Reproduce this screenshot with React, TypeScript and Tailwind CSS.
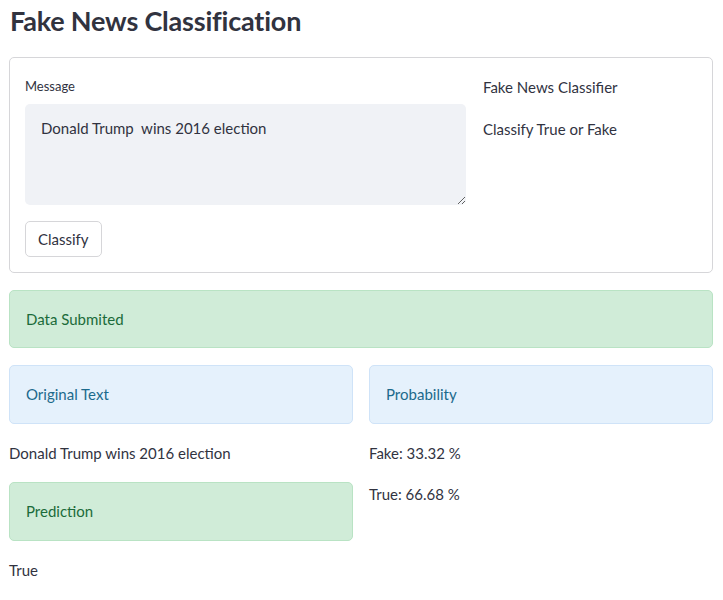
import React from "react";

export default function App() {
  return (
    <div
      className="min-h-[600px] bg-white pl-[9px] pr-[10px] text-[#31333F]"
      style={{ fontFamily: "Lato, 'Noto Sans', sans-serif" }}
    >
      <h1 className="pl-[1px] pt-[3px] text-[27px] font-bold leading-[36px] tracking-[-0.2px] h-[57px]">
        Fake News Classification
      </h1>

      <div className="flex flex-col gap-[17px]">
        <div className="rounded-[5px] border border-[#d6d6d9] p-[15px]">
          <div className="grid grid-cols-[441px_1fr] gap-[17px]">
            <div className="flex flex-col">
              <label className="pt-[3px] text-[13px] leading-[20px] h-[31px]">Message</label>
              <textarea
                className="h-[101px] w-full resize-y rounded-[5px] bg-[#f0f2f6] px-[16px] pt-[12px] text-[15px] leading-[24px] text-[#31333F] outline-none"
                defaultValue="Donald Trump  wins 2016 election"
              />
              <div className="pt-[16px]">
                <button className="h-[36px] rounded-[5px] border border-[#d6d6d9] bg-white px-[12px] text-[15px] leading-[24px] text-[#31333F]">
                  Classify
                </button>
              </div>
            </div>
            <div className="flex flex-col pt-[2px] text-[15px] leading-[24px]">
              <p>Fake News Classifier</p>
              <p className="mt-[18px]">Classify True or Fake</p>
            </div>
          </div>
        </div>

        <div className="rounded-[5px] border border-[#b9e3c4] bg-[#d0ecd8] px-[16px] py-[16px] text-[15px] leading-[24px] text-[#1b6b3a]">
          Data Submited
        </div>

        <div className="grid grid-cols-2 gap-[16px]">
          <div className="flex flex-col gap-[17px]">
            <div className="rounded-[5px] border border-[#cfe3f8] bg-[#e5f1fc] px-[16px] py-[17px] text-[15px] leading-[23px] text-[#1c6a8c]">
              Original Text
            </div>
            <p className="text-[15px] leading-[24px]">Donald Trump wins 2016 election</p>
            <div className="rounded-[5px] border border-[#b9e3c4] bg-[#d0ecd8] px-[16px] py-[17px] text-[15px] leading-[23px] text-[#1b6b3a]">
              Prediction
            </div>
            <p className="text-[15px] leading-[24px]">True</p>
          </div>
          <div className="flex flex-col gap-[17px]">
            <div className="rounded-[5px] border border-[#cfe3f8] bg-[#e5f1fc] px-[16px] py-[17px] text-[15px] leading-[23px] text-[#1c6a8c]">
              Probability
            </div>
            <p className="text-[15px] leading-[24px]">Fake: 33.32 %</p>
            <p className="text-[15px] leading-[24px]">True: 66.68 %</p>
          </div>
        </div>
      </div>
    </div>
  );
}
